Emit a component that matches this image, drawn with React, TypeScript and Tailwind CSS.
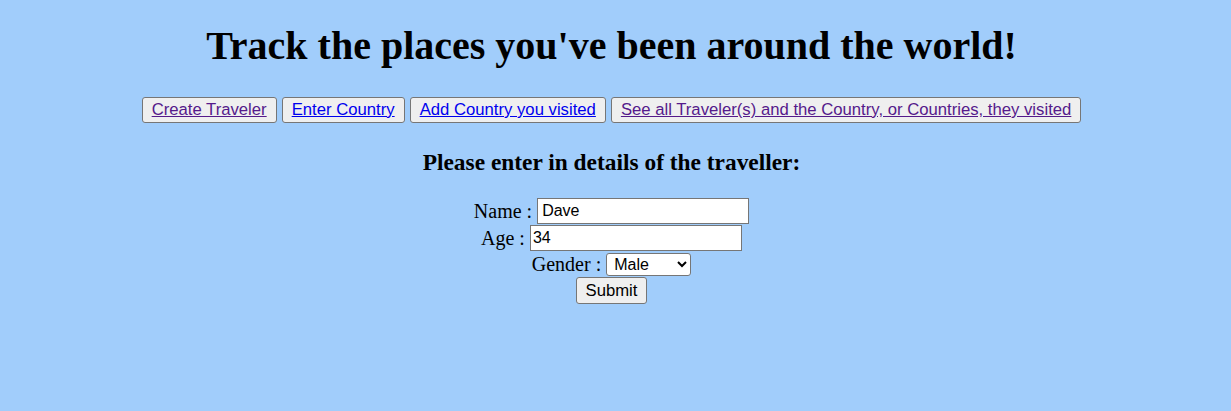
import React from "react";

const btn =
  "h-[26px] px-[9px] border border-[#767676] rounded-[3px] bg-[#efefef] leading-[20px]";

export default function App() {
  return (
    <div className="min-h-[411px] w-full bg-[#a1cdfb] font-['Liberation_Serif',serif] text-black">
      <div className="flex flex-col items-center pr-[8px]">
        <h1 className="mt-[23px] text-[40px] font-bold leading-[46px]">
          Track the places you've been around the world!
        </h1>
        <div className="mt-[28px] flex gap-[5px] font-['Liberation_Sans',Arial,sans-serif] text-[16.7px]">
          <button className={btn}>
            <a href="#" className="text-[#551a8b] underline">Create Traveler</a>
          </button>
          <button className={btn}>
            <a href="#" className="text-[#0000ee] underline">Enter Country</a>
          </button>
          <button className={btn}>
            <a href="#" className="text-[#0000ee] underline">Add Country you visited</a>
          </button>
          <button className={btn}>
            <a href="#" className="text-[#551a8b] underline">
              See all Traveler(s) and the Country, or Countries, they visited
            </a>
          </button>
        </div>
        <h3 className="mt-[26px] text-[23.4px] font-bold leading-[27px]">
          Please enter in details of the traveller:
        </h3>
        <form className="mt-[22px] flex flex-col items-center text-[20px]">
          <div className="flex h-[27px] items-start gap-[5px]">
            <span className="leading-[26px]">Name :</span>
            <input
              defaultValue="Dave"
              className="h-[26px] w-[212px] border border-[#767676] bg-white px-[4px] font-['Liberation_Sans',Arial,sans-serif] text-[16px] outline-none"
            />
          </div>
          <div className="flex h-[27px] items-start gap-[5px]">
            <span className="leading-[26px]">Age :</span>
            <input
              defaultValue="34"
              className="h-[26px] w-[212px] border border-[#767676] bg-white px-[2px] font-['Liberation_Sans',Arial,sans-serif] text-[16px] outline-none"
            />
          </div>
          <div className="flex h-[25px] items-start gap-[5px]">
            <span className="leading-[24px]">Gender :</span>
            <select
              defaultValue="Male"
              className="mt-[1px] h-[23px] w-[85px] rounded-[3px] border border-[#767676] bg-white pl-[3px] font-['Liberation_Sans',Arial,sans-serif] text-[16px]"
            >
              <option>Male</option>
              <option>Female</option>
            </select>
          </div>
          <div className="flex h-[28px] items-start">
            <button
              type="button"
              className="h-[27px] rounded-[3px] border border-[#767676] bg-[#efefef] px-[9px] font-['Liberation_Sans',Arial,sans-serif] text-[16.7px]"
            >
              Submit
            </button>
          </div>
        </form>
      </div>
    </div>
  );
}
